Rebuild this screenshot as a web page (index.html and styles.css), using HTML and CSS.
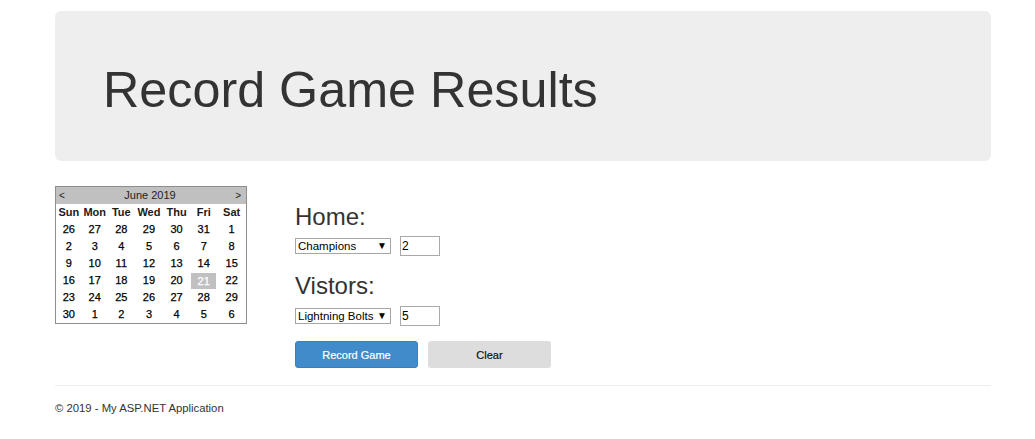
FILE: index.html
```html
<!DOCTYPE html>
<html>
<head>
<meta charset="utf-8">
<title>Record Game Results</title>
<link rel="stylesheet" href="styles.css">
</head>
<body>
<div class="page">
  <div class="jumbotron">
    <h1>Record Game Results</h1>
  </div>
  <div class="main">
    <table class="cal">
      <colgroup>
        <col class="c26"><col class="c26"><col class="c27"><col class="c28"><col class="c27"><col class="c27"><col class="c29">
      </colgroup>
      <tr class="cal-title">
        <td colspan="7">
          <div class="cal-head"><span class="nav">&lt;</span><span>June 2019</span><span class="nav">&gt;</span></div>
        </td>
      </tr>
      <tr class="cal-days">
        <th>Sun</th><th>Mon</th><th>Tue</th><th>Wed</th><th>Thu</th><th>Fri</th><th>Sat</th>
      </tr>
      <tr><td>26</td><td>27</td><td>28</td><td>29</td><td>30</td><td>31</td><td>1</td></tr>
      <tr><td>2</td><td>3</td><td>4</td><td>5</td><td>6</td><td>7</td><td>8</td></tr>
      <tr><td>9</td><td>10</td><td>11</td><td>12</td><td>13</td><td>14</td><td>15</td></tr>
      <tr><td>16</td><td>17</td><td>18</td><td>19</td><td>20</td><td class="sel-day"><span>21</span></td><td>22</td></tr>
      <tr><td>23</td><td>24</td><td>25</td><td>26</td><td>27</td><td>28</td><td>29</td></tr>
      <tr><td>30</td><td>1</td><td>2</td><td>3</td><td>4</td><td>5</td><td>6</td></tr>
    </table>
    <form class="game">
      <h3 class="team-label">Home:</h3>
      <div class="field-row">
        <span class="select-wrap"><select><option>Champions</option><option>Lightning Bolts</option></select></span>
        <input class="score" type="text" value="2">
      </div>
      <h3 class="team-label second">Vistors:</h3>
      <div class="field-row second">
        <span class="select-wrap"><select><option>Lightning Bolts</option><option>Champions</option></select></span>
        <input class="score" type="text" value="5">
      </div>
      <div class="buttons">
        <button type="button" class="btn btn-primary">Record Game</button>
        <button type="button" class="btn btn-default">Clear</button>
      </div>
    </form>
  </div>
  <hr class="rule">
  <footer class="footer">
    <p>&copy; 2019 - My ASP.NET Application</p>
  </footer>
</div>
</body>
</html>
```

FILE: styles.css
```css
html, body {
  margin: 0;
  padding: 0;
  background: #fff;
}

body {
  font-family: "Liberation Sans", Arial, sans-serif;
  color: #333;
}

.page {
  width: 936px;
  margin-left: 55px;
}

.jumbotron {
  margin-top: 11px;
  height: 150px;
  box-sizing: border-box;
  padding: 51px 48px 0;
  background: #eeeeee;
  border-radius: 6px;
}

.jumbotron h1 {
  margin: 0;
  font-size: 50.3px;
  line-height: 55px;
  font-weight: normal;
  color: #333;
}

.main {
  display: flex;
  align-items: flex-start;
  margin-top: 25px;
}

/* Calendar */
.cal {
  border-collapse: collapse;
  table-layout: fixed;
  width: 192px;
  border: 1px solid #8e8e8e;
  font-size: 11px;
  color: #000;
}

.c26 { width: 26px; }
.c27 { width: 27px; }
.c28 { width: 28px; }
.c29 { width: 29px; }

.cal td, .cal th {
  height: 17px;
  padding: 0;
  text-align: center;
  vertical-align: middle;
  line-height: 17px;
}

.cal td {
  font-weight: normal;
  color: #000;
  -webkit-text-stroke: 0.25px #000;
}

.cal th {
  font-weight: bold;
  color: #1a1a1a;
}

.cal-title td {
  background: #c0c0c0;
  font-weight: normal;
  color: #222;
  -webkit-text-stroke: 0;
}

.cal-head {
  display: flex;
  justify-content: space-between;
  padding: 0 5px 0 3px;
}

.cal-head .nav {
  font-size: 10px;
}

.cal td.sel-day {
  padding: 0 1px;
}

.cal td.sel-day span {
  display: block;
  background: #c0c0c0;
  color: #fff;
  -webkit-text-stroke: 0.25px #fff;
  height: 16px;
  line-height: 16px;
}

/* Form */
.game {
  margin-left: 48px;
}

.team-label {
  margin: 17px 0 0;
  font-size: 24px;
  line-height: 27px;
  font-weight: normal;
  color: #333;
}

.team-label.second {
  margin-top: 16px;
}

.field-row {
  display: flex;
  align-items: center;
  gap: 9px;
  height: 20px;
  margin-top: 6px;
}

.field-row.second {
  margin-top: 7px;
}

.select-wrap {
  position: relative;
  display: block;
  width: 96px;
  height: 16px;
}

.select-wrap select {
  appearance: none;
  -webkit-appearance: none;
  display: block;
  width: 96px;
  height: 16px;
  box-sizing: border-box;
  margin: 0;
  padding: 0 0 0 2px;
  border: 1px solid #a6a6a6;
  border-radius: 0;
  background: #fff;
  font-family: "Liberation Sans", Arial, sans-serif;
  font-size: 11.5px;
  line-height: 14px;
  color: #000;
}

.select-wrap::after {
  content: "\25BC";
  position: absolute;
  right: 4px;
  top: 0;
  font-size: 10px;
  line-height: 16px;
  color: #000;
  pointer-events: none;
}

.score {
  width: 40px;
  height: 20px;
  box-sizing: border-box;
  margin: 0;
  padding: 0 1px;
  border: 1px solid #a9a9a9;
  border-radius: 0;
  font-family: "Liberation Sans", Arial, sans-serif;
  font-size: 12px;
  color: #000;
}

.buttons {
  display: flex;
  gap: 10px;
  margin-top: 15px;
}

.btn {
  width: 123px;
  height: 27px;
  margin: 0;
  padding: 0;
  border: 0;
  border-radius: 3px;
  font-family: "Liberation Sans", Arial, sans-serif;
  font-size: 11px;
  -webkit-text-stroke: 0.2px currentColor;
}

.btn-primary {
  background: #428bca;
  color: #fff;
  border: 1px solid #3a7fbc;
}

.btn-default {
  background: #dddddd;
  color: #111;
}

.rule {
  margin: 17px 0 0;
  border: 0;
  border-top: 1px solid #eeeeee;
  height: 0;
}

.footer p {
  margin: 14px 0 0;
  font-size: 11.3px;
  line-height: 16px;
  color: #333;
}
```
